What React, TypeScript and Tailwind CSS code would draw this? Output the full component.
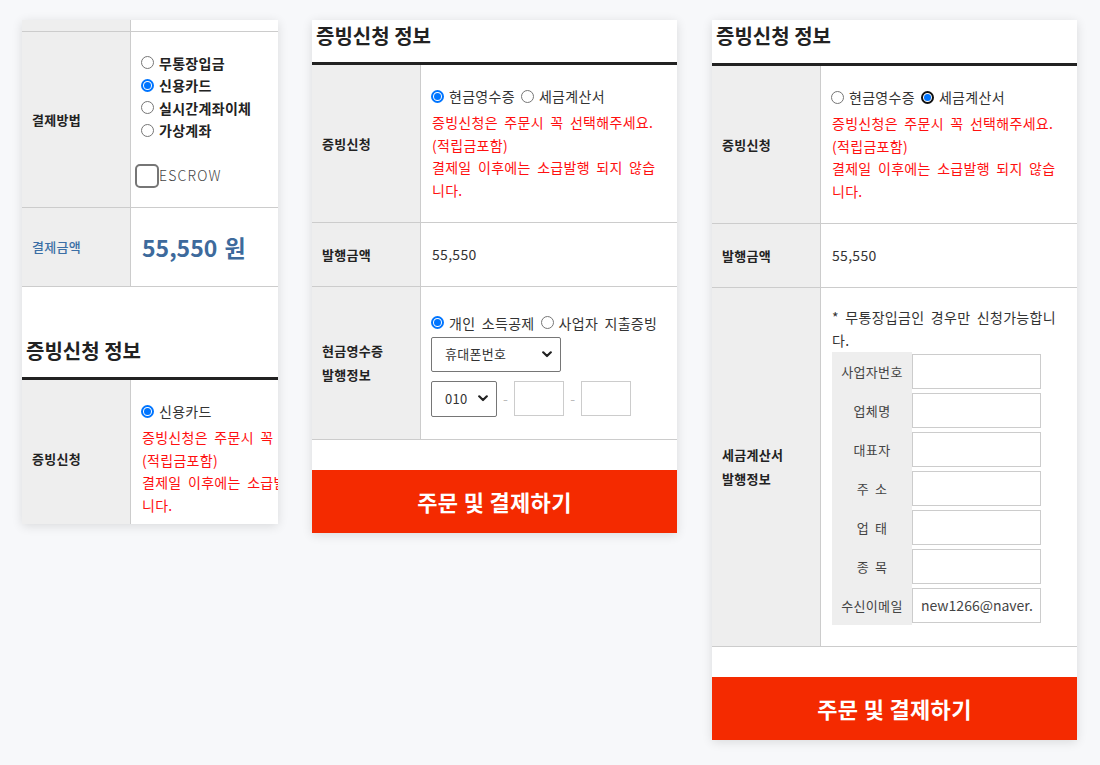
import React from "react";

const FONT = "font-['Noto_Sans_CJK_KR','Noto_Sans',sans-serif] tracking-[0.3px] [word-spacing:3px]";

function Radio({ checked, focus }: { checked?: boolean; focus?: boolean }) {
  if (!checked) {
    return <span className="inline-block w-[13px] h-[13px] rounded-full border border-[#767676] bg-white shrink-0" />;
  }
  return (
    <span
      className={
        focus
          ? "inline-flex items-center justify-center w-[13px] h-[13px] rounded-full border-2 border-[#101010] bg-white shrink-0"
          : "inline-flex items-center justify-center w-[13px] h-[13px] rounded-full border-2 border-[#0075ff] bg-white shrink-0"
      }
    >
      <span className="w-[7px] h-[7px] rounded-full bg-[#0075ff]" />
    </span>
  );
}

function Opt({ checked, focus, children, first }: { checked?: boolean; focus?: boolean; children: React.ReactNode; first?: boolean }) {
  return (
    <span className={first ? "inline-flex items-center ml-[-1px]" : "inline-flex items-center ml-[6px]"}>
      <Radio checked={checked} focus={focus} />
      <span className="ml-[5px]">{children}</span>
    </span>
  );
}

function Row({
  label,
  children,
  className,
  top,
}: {
  label: React.ReactNode;
  children?: React.ReactNode;
  className: string;
  top?: boolean;
}) {
  return (
    <div className={"flex border-b border-[#cccccc] " + className}>
      <div className="w-[109px] shrink-0 bg-[#eeeeee] border-r border-[#cccccc] flex items-center pl-[10px] text-[13px] font-bold leading-[24px] text-[#222]">
        {label}
      </div>
      <div
        className={
          top
            ? "flex-1 min-w-0 flex flex-col justify-start pt-[18px] pl-[11px] pr-[11px] text-[14px] text-[#333]"
            : "flex-1 min-w-0 flex flex-col justify-center pl-[11px] pr-[11px] text-[14px] text-[#333]"
        }
      >
        {children}
      </div>
    </div>
  );
}

function Header({ className }: { className: string }) {
  return (
    <div className={"border-b-[3px] border-[#222] pl-[4px] pt-[2px] " + className}>
      <div className="text-[20px] leading-[28px] font-bold text-[#222] tracking-normal [word-spacing:0px]">증빙신청 정보</div>
    </div>
  );
}

function Notice() {
  return (
    <div className="text-[#ff1010] leading-[22.5px] mt-[2px]">
      증빙신청은 주문시 꼭 선택해주세요.
      <br />
      (적립금포함)
      <br />
      결제일 이후에는 소급발행 되지 않습니다.
    </div>
  );
}

function Chevron() {
  return (
    <svg width="10" height="7" viewBox="0 0 10 7" className="shrink-0">
      <path d="M1.2 1.3 L5 5 L8.8 1.3" fill="none" stroke="#222" strokeWidth="2.2" strokeLinecap="round" strokeLinejoin="round" />
    </svg>
  );
}

function FakeSelect({ value, className }: { value: string; className: string }) {
  return (
    <div className={"flex items-center justify-between border border-[#767676] rounded-[2px] bg-white pl-[13px] pr-[8px] text-[13px] text-[#333] " + className}>
      <span>{value}</span>
      <Chevron />
    </div>
  );
}

function Button() {
  return (
    <button className="w-full h-[63px] bg-[#f42a00] text-white text-[22px] font-bold flex items-center justify-center">
      주문 및 결제하기
    </button>
  );
}

function Panel1() {
  return (
    <div className="w-[256px] h-[504px] overflow-hidden bg-white shadow-[0_2px_10px_rgba(0,0,0,0.12)]">
      <div className="w-[365px]">
        <Row label="" className="h-[12px]" />
        <Row label="결제방법" className="h-[176px]">
          <div className="flex flex-col leading-[22.5px] text-[14px] font-bold text-[#222]">
            <Opt first>무통장입금</Opt>
            <Opt first checked>
              신용카드
            </Opt>
            <Opt first>실시간계좌이체</Opt>
            <Opt first>가상계좌</Opt>
          </div>
          <div className="flex items-center mt-[22px] ml-[-7px]">
            <span className="w-[24px] h-[24px] rounded-[5px] border-2 border-[#767676] bg-white" />
            <span className="font-light text-[#444] text-[14px] tracking-[1.2px]">ESCROW</span>
          </div>
        </Row>
        <Row label={<span className="font-medium text-[#3b6ea5]">결제금액</span>} className="h-[79px]">
          <div className="text-[23px] font-bold text-[#3d6a9c] leading-[30px] tracking-normal [word-spacing:2px]">55,550 원</div>
        </Row>
        <Header className="mt-[48px] h-[45px]" />
        <Row label="증빙신청" className="h-[158px]" top>
          <div className="leading-[26px] text-[14px] flex items-center">
            <Opt first checked>
              신용카드
            </Opt>
          </div>
          <Notice />
        </Row>
      </div>
    </div>
  );
}

function Panel2() {
  return (
    <div className="w-[365px] ml-[34px] bg-white shadow-[0_2px_10px_rgba(0,0,0,0.12)]">
      <Header className="h-[45px]" />
      <Row label="증빙신청" className="h-[158px]" top>
        <div className="leading-[26px] text-[14px] flex items-center">
          <Opt first checked>
            현금영수증
          </Opt>
          <Opt>세금계산서</Opt>
        </div>
        <Notice />
      </Row>
      <Row label="발행금액" className="h-[64px]">
        <div>55,550</div>
      </Row>
      <Row
        label={
          <span>
            현금영수증
            <br />
            발행정보
          </span>
        }
        className="h-[153px]"
      >
        <div className="leading-[26px] text-[14px] flex items-center whitespace-nowrap">
          <Opt first checked>
            개인 소득공제
          </Opt>
          <Opt>사업자 지출증빙</Opt>
        </div>
        <FakeSelect value="휴대폰번호" className="w-[130px] h-[35px] mt-[1px] ml-[-1px]" />
        <div className="flex items-center mt-[9px] ml-[-1px]">
          <FakeSelect value="010" className="w-[66px] h-[36px]" />
          <span className="mx-[6px] text-[#bbb]">-</span>
          <div className="w-[50px] h-[35px] border border-[#cccccc] bg-white" />
          <span className="mx-[6px] text-[#bbb]">-</span>
          <div className="w-[50px] h-[35px] border border-[#cccccc] bg-white" />
        </div>
      </Row>
      <div className="h-[30px]" />
      <Button />
    </div>
  );
}

const taxRows: [string, string][] = [
  ["사업자번호", ""],
  ["업체명", ""],
  ["대표자", ""],
  ["주 소", ""],
  ["업 태", ""],
  ["종 목", ""],
  ["수신이메일", "new1266@naver."],
];

function Panel3() {
  return (
    <div className="w-[365px] ml-[35px] bg-white shadow-[0_2px_10px_rgba(0,0,0,0.12)]">
      <Header className="h-[46px]" />
      <Row label="증빙신청" className="h-[158px]" top>
        <div className="leading-[26px] text-[14px] flex items-center">
          <Opt first>현금영수증</Opt>
          <Opt checked focus>
            세금계산서
          </Opt>
        </div>
        <Notice />
      </Row>
      <Row label="발행금액" className="h-[64px]">
        <div>55,550</div>
      </Row>
      <Row
        label={
          <span>
            세금계산서
            <br />
            발행정보
          </span>
        }
        className="h-[359px]"
      >
        <div className="leading-[22.5px] text-[#333] mt-[-3px]">* 무통장입금인 경우만 신청가능합니다.</div>
        <div className="flex flex-col mt-[1px]">
          {taxRows.map(([k, v]) => (
            <div key={k} className="flex">
              <div className="w-[80px] h-[39px] bg-[#eeeeee] flex items-center justify-center text-[13px] text-[#444] whitespace-pre">{k}</div>
              <div className="py-[2px]">
                <div className="w-[129px] h-[35px] border border-[#cccccc] bg-white flex items-center pl-[8px] text-[14px] text-[#444] overflow-hidden whitespace-nowrap tracking-normal">
                  {v}
                </div>
              </div>
            </div>
          ))}
        </div>
      </Row>
      <div className="h-[30px]" />
      <Button />
    </div>
  );
}

export default function App() {
  return (
    <div className={"min-h-screen bg-[#f7f8fa] pl-[22px] pt-[20px] flex items-start " + FONT}>
      <Panel1 />
      <Panel2 />
      <Panel3 />
    </div>
  );
}
